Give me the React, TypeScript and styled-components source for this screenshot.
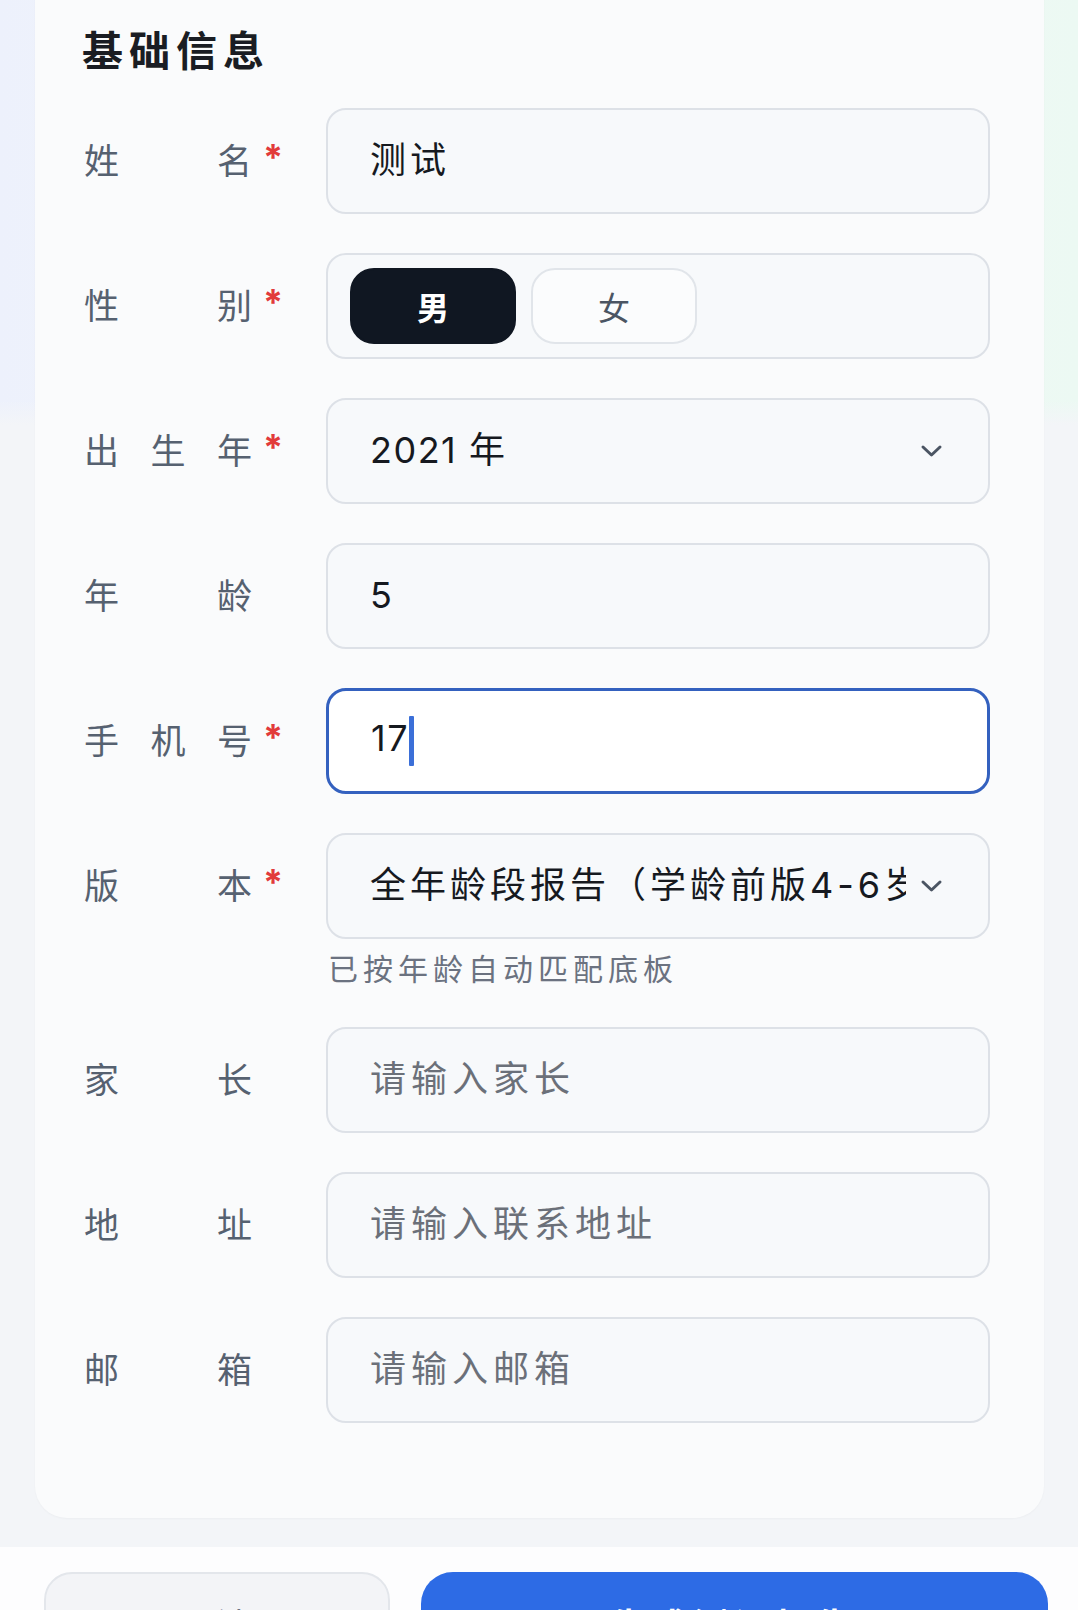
import React from 'react';
import styled, { createGlobalStyle } from 'styled-components';

const GlobalStyle = createGlobalStyle`
  html, body { margin: 0; padding: 0; }
  body {
    width: 1078px;
    height: 1610px;
    overflow: hidden;
    font-family: Inter, "Noto Sans CJK SC", "Noto Sans", sans-serif;
    -webkit-font-smoothing: antialiased;
  }
  * { box-sizing: border-box; }
`;

const Page = styled.div`
  width: 1078px;
  height: 1610px;
  overflow: hidden;
  display: flex;
  flex-direction: column;
  background:
    linear-gradient(180deg, rgba(243, 245, 248, 0) 0, rgba(243, 245, 248, 0) 400px, #f3f5f8 425px),
    linear-gradient(90deg, #edf1fc 0%, #f5f7f9 50%, #ecf9f3 100%);
`;

const ScrollArea = styled.div`
  flex: none;
  padding: 0 34px 29px 35px;
`;

const Card = styled.section`
  margin-top: -40px;
  background: #fafbfc;
  border-radius: 32px;
  padding: 67px 54px 95px 49px;
  box-shadow: 0 1px 2px rgba(16, 24, 40, 0.03);
`;

const Title = styled.h2`
  margin: 0 0 33px -2px;
  font-size: 41px;
  line-height: 48px;
  font-weight: 700;
  letter-spacing: 6px;
  color: #1a1d23;
`;

const Form = styled.div`
  display: flex;
  flex-direction: column;
  gap: 39px;
`;

const Row = styled.div`
  display: grid;
  grid-template-columns: 242px 1fr;
`;

const LabelCell = styled.div`
  height: 106px;
  display: flex;
  align-items: center;
  gap: 11px;
`;

const LabelText = styled.span`
  width: 168px;
  font-size: 35px;
  line-height: 1;
  color: #566170;
  text-align: justify;
  text-align-last: justify;
  white-space: nowrap;
`;

const Required = styled.span`
  font-size: 36px;
  line-height: 1;
  font-weight: 700;
  color: #e23b3b;
  align-self: center;
  margin-top: -8px;
`;

const FieldCol = styled.div`
  display: flex;
  flex-direction: column;
  min-width: 0;
`;

const Box = styled.div<{ $focused?: boolean }>`
  height: 106px;
  display: flex;
  align-items: center;
  padding: 0 45px 0 42px;
  border-radius: 20px;
  border: ${(p) => (p.$focused ? '3px solid #3461bf' : '2px solid #dde1e7')};
  background: ${(p) => (p.$focused ? '#ffffff' : '#f7f9fb')};
  min-width: 0;
`;

const Value = styled.span<{ $placeholder?: boolean; $digits?: boolean }>`
  flex: 1;
  min-width: 0;
  overflow: hidden;
  white-space: nowrap;
  font-size: 36px;
  line-height: 1.2;
  letter-spacing: ${(p) => (p.$placeholder ? '5px' : p.$digits ? '1.5px' : '4px')};
  color: ${(p) => (p.$placeholder ? '#6b7079' : '#16191f')};
`;

const Caret = styled.span`
  display: inline-block;
  width: 5px;
  height: 50px;
  margin-left: 0;
  background: #3b6fd8;
  vertical-align: middle;
  border-radius: 1px;
`;

const Chevron = styled.svg`
  flex: none;
  width: 23px;
  height: 14px;
  margin-left: 14px;
`;

const GenderBox = styled.div`
  height: 106px;
  display: flex;
  align-items: center;
  gap: 15px;
  padding: 0 22px;
  border-radius: 20px;
  border: 2px solid #dde1e7;
  background: #f7f9fb;
`;

const GenderOption = styled.div<{ $active?: boolean }>`
  width: 166px;
  height: 76px;
  display: flex;
  align-items: center;
  justify-content: center;
  border-radius: 24px;
  font-size: 32px;
  font-weight: ${(p) => (p.$active ? 700 : 400)};
  color: ${(p) => (p.$active ? '#ffffff' : '#4b5563')};
  background: ${(p) => (p.$active ? '#101722' : '#fbfcfd')};
  border: ${(p) => (p.$active ? '2px solid #101722' : '2px solid #e1e5ea')};
`;

const Hint = styled.div`
  margin-top: 12px;
  font-size: 30px;
  line-height: 37px;
  letter-spacing: 5px;
  color: #6b7280;
  padding-left: 2px;
`;

const Footer = styled.footer`
  flex: 1;
  background: #fdfdfe;
  display: flex;
  gap: 31px;
  padding: 25px 30px 0 44px;
`;

const GhostButton = styled.div`
  flex: none;
  width: 346px;
  height: 110px;
  border-radius: 28px;
  background: #f3f4f7;
  border: 2px solid #e3e6eb;
  text-align: center;
  padding-top: 35px;
  font-size: 34px;
  line-height: 1;
  letter-spacing: 6px;
  color: #6b7280;
`;

const PrimaryButton = styled.div`
  flex: 1;
  height: 110px;
  border-radius: 32px;
  background: #2d6be5;
  text-align: center;
  padding-top: 37px;
  font-size: 34px;
  line-height: 1;
  font-weight: 700;
  letter-spacing: 7px;
  color: #ffffff;
`;

const ChevronIcon = () => (
  <Chevron viewBox="0 0 23 14" fill="none">
    <path d="M3 3 L11.5 11 L20 3" stroke="#4b5563" strokeWidth="3" strokeLinecap="round" strokeLinejoin="round" />
  </Chevron>
);

type FieldRowProps = {
  label: string;
  required?: boolean;
  children: React.ReactNode;
};

const FieldRow = ({ label, required, children }: FieldRowProps) => (
  <Row>
    <LabelCell>
      <LabelText>{label}</LabelText>
      {required && <Required>*</Required>}
    </LabelCell>
    <FieldCol>{children}</FieldCol>
  </Row>
);

export default function App() {
  return (
    <>
      <GlobalStyle />
      <Page>
        <ScrollArea>
          <Card>
            <Title>基础信息</Title>
            <Form>
              <FieldRow label="姓名" required>
                <Box>
                  <Value>测试</Value>
                </Box>
              </FieldRow>
              <FieldRow label="性别" required>
                <GenderBox>
                  <GenderOption $active>男</GenderOption>
                  <GenderOption>女</GenderOption>
                </GenderBox>
              </FieldRow>
              <FieldRow label="出生年" required>
                <Box>
                  <Value $digits>2021 年</Value>
                  <ChevronIcon />
                </Box>
              </FieldRow>
              <FieldRow label="年龄">
                <Box>
                  <Value $digits>5</Value>
                </Box>
              </FieldRow>
              <FieldRow label="手机号" required>
                <Box $focused>
                  <Value $digits>
                    17
                    <Caret />
                  </Value>
                </Box>
              </FieldRow>
              <FieldRow label="版本" required>
                <Box>
                  <Value>全年龄段报告（学龄前版4-6岁）</Value>
                  <ChevronIcon />
                </Box>
                <Hint>已按年龄自动匹配底板</Hint>
              </FieldRow>
              <FieldRow label="家长">
                <Box>
                  <Value $placeholder>请输入家长</Value>
                </Box>
              </FieldRow>
              <FieldRow label="地址">
                <Box>
                  <Value $placeholder>请输入联系地址</Value>
                </Box>
              </FieldRow>
              <FieldRow label="邮箱">
                <Box>
                  <Value $placeholder>请输入邮箱</Value>
                </Box>
              </FieldRow>
            </Form>
          </Card>
        </ScrollArea>
        <Footer>
          <GhostButton>取消</GhostButton>
          <PrimaryButton>生成测评报告</PrimaryButton>
        </Footer>
      </Page>
    </>
  );
}
